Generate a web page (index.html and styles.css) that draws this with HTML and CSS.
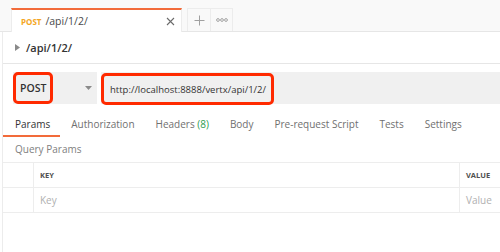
FILE: index.html
```html
<!DOCTYPE html>
<html>
<head>
<meta charset="utf-8">
<link rel="stylesheet" href="styles.css">
</head>
<body>
<div class="tabbar">
  <div class="tab">
    <span class="tab-method">POST</span>
    <span class="tab-name">/api/1/2/</span>
    <svg class="tab-close" width="9" height="9" viewBox="0 0 9 9"><path d="M1 1L8 8M8 1L1 8" stroke="#6b6b6b" stroke-width="1.1" fill="none"/></svg>
  </div>
  <div class="tab-btn plus">
    <svg width="11" height="11" viewBox="0 0 11 11"><path d="M5.5 0.5V10.5M0.5 5.5H10.5" stroke="#a0a0a0" stroke-width="1" fill="none"/></svg>
  </div>
  <div class="tab-btn more">
    <svg width="12" height="4" viewBox="0 0 12 4"><circle cx="2" cy="2" r="1.4" stroke="#909090" stroke-width="0.8" fill="none"/><circle cx="6" cy="2" r="1.4" stroke="#909090" stroke-width="0.8" fill="none"/><circle cx="10" cy="2" r="1.4" stroke="#909090" stroke-width="0.8" fill="none"/></svg>
  </div>
</div>
<div class="main">
  <div class="crumb">
    <svg class="caret" width="5" height="7" viewBox="0 0 5 7"><path d="M0 0L5 3.5L0 7Z" fill="#8a8a8a"/></svg>
    <span class="crumb-name">/api/1/2/</span>
  </div>
  <div class="request">
    <div class="method-select">
      <div class="hl method-hl">POST</div>
      <svg class="arrow" width="7" height="4" viewBox="0 0 7 4"><path d="M0 0H7L3.5 4Z" fill="#8a8a8a"/></svg>
    </div>
    <div class="url">
      <div class="hl url-hl">http://localhost:8888/vertx/api/1/2/</div>
    </div>
  </div>
  <div class="req-tabs">
    <div class="req-tab active">Params</div>
    <div class="req-tab">Authorization</div>
    <div class="req-tab">Headers <span class="count">(8)</span></div>
    <div class="req-tab">Body</div>
    <div class="req-tab">Pre-request Script</div>
    <div class="req-tab">Tests</div>
    <div class="req-tab">Settings</div>
  </div>
  <div class="section-title">Query Params</div>
  <div class="table">
    <div class="row head">
      <div class="cell check"></div>
      <div class="cell key">KEY</div>
      <div class="cell value">VALUE</div>
    </div>
    <div class="row">
      <div class="cell check"></div>
      <div class="cell key placeholder">Key</div>
      <div class="cell value placeholder">Value</div>
    </div>
  </div>
</div>
</body>
</html>
```
FILE: styles.css
```css
html, body {
  margin: 0;
  padding: 0;
  background: #ffffff;
  font-family: "Open Sans", "Liberation Sans", sans-serif;
  width: 500px;
  height: 252px;
  overflow: hidden;
}

.tabbar {
  height: 32px;
  background: #f9f9f9;
  border-bottom: 1px solid #e6e6e6;
  display: flex;
  align-items: flex-end;
  padding-left: 11px;
  box-sizing: border-box;
}

.tab {
  width: 171px;
  height: 24px;
  background: #ffffff;
  border-top: 2px solid #f26b3a;
  border-left: 1px solid #ececec;
  border-right: 1px solid #ececec;
  box-sizing: border-box;
  margin-bottom: -1px;
  display: flex;
  align-items: center;
  padding: 0 6px 0 9px;
}

.tab-method {
  color: #f4a623;
  font-size: 8px;
  font-weight: 700;
  margin-right: 4px;
}

.tab-name {
  color: #4a4a4a;
  font-size: 10.5px;
  flex: 1;
}

.tab-close {
  display: block;
}

.tab-btn {
  height: 23px;
  box-sizing: border-box;
  border: 1px solid #ececec;
  border-bottom: none;
  display: flex;
  align-items: center;
  justify-content: center;
}

.plus {
  width: 24px;
  margin-left: 5px;
}

.more {
  width: 22px;
  border-left: none;
}

.main {
  margin-left: 2px;
  border-left: 1px solid #ececec;
  height: 220px;
}

.crumb {
  height: 31px;
  border-bottom: 1px solid #e6e6e6;
  display: flex;
  align-items: center;
  padding-left: 12px;
}

.caret {
  margin-right: 6px;
}

.crumb-name {
  color: #333333;
  font-size: 11px;
  font-weight: 600;
}

.request {
  margin-top: 8px;
  margin-left: 10px;
  height: 32px;
  display: flex;
}

.method-select {
  width: 84px;
  background: #f0f0f0;
  display: flex;
  align-items: center;
  justify-content: space-between;
  padding-right: 5px;
  box-sizing: border-box;
}

.hl {
  border: 3px solid #ff2a00;
  border-radius: 5px;
  box-sizing: border-box;
  height: 32px;
  display: flex;
  align-items: center;
  color: #333333;
  white-space: nowrap;
}

.method-hl {
  width: 40px;
  padding-left: 4px;
  font-weight: 600;
  font-size: 10.5px;
}

.url {
  flex: 1;
  margin-left: 4px;
  background: #f0f0f0;
  display: flex;
  align-items: center;
}

.url-hl {
  width: 173px;
  padding-left: 6px;
  margin-top: 2px;
  font-size: 9.5px;
}

.req-tabs {
  display: flex;
  height: 25px;
  margin-top: 8px;
}

.req-tab {
  font-size: 10px;
  color: #707070;
  padding-top: 5px;
  margin-left: 21px;
  box-sizing: border-box;
  white-space: nowrap;
}

.req-tab.active {
  margin-left: 0;
  padding-left: 12px;
  padding-right: 10px;
  color: #333333;
  border-bottom: 2px solid #f26b3a;
}

.req-tab.active + .req-tab {
  margin-left: 11px;
}

.count {
  color: #2c9d4f;
}

.section-title {
  font-size: 10px;
  color: #808080;
  padding-left: 12px;
  height: 25px;
  line-height: 25px;
}

.table {
  border-top: 1px solid #ededed;
}

.row {
  display: flex;
  height: 24px;
  border-bottom: 1px solid #ededed;
}

.cell {
  display: flex;
  align-items: center;
  box-sizing: border-box;
}

.check {
  width: 31px;
  border-right: 1px solid #ededed;
}

.key {
  flex: 1;
  padding-left: 6px;
}

.value {
  width: 41px;
  border-left: 1px solid #ededed;
  padding-left: 6px;
}

.head .cell {
  font-size: 7.5px;
  font-weight: 700;
  color: #505050;
}

.placeholder {
  font-size: 10px;
  color: #b0b0b0;
}
```
